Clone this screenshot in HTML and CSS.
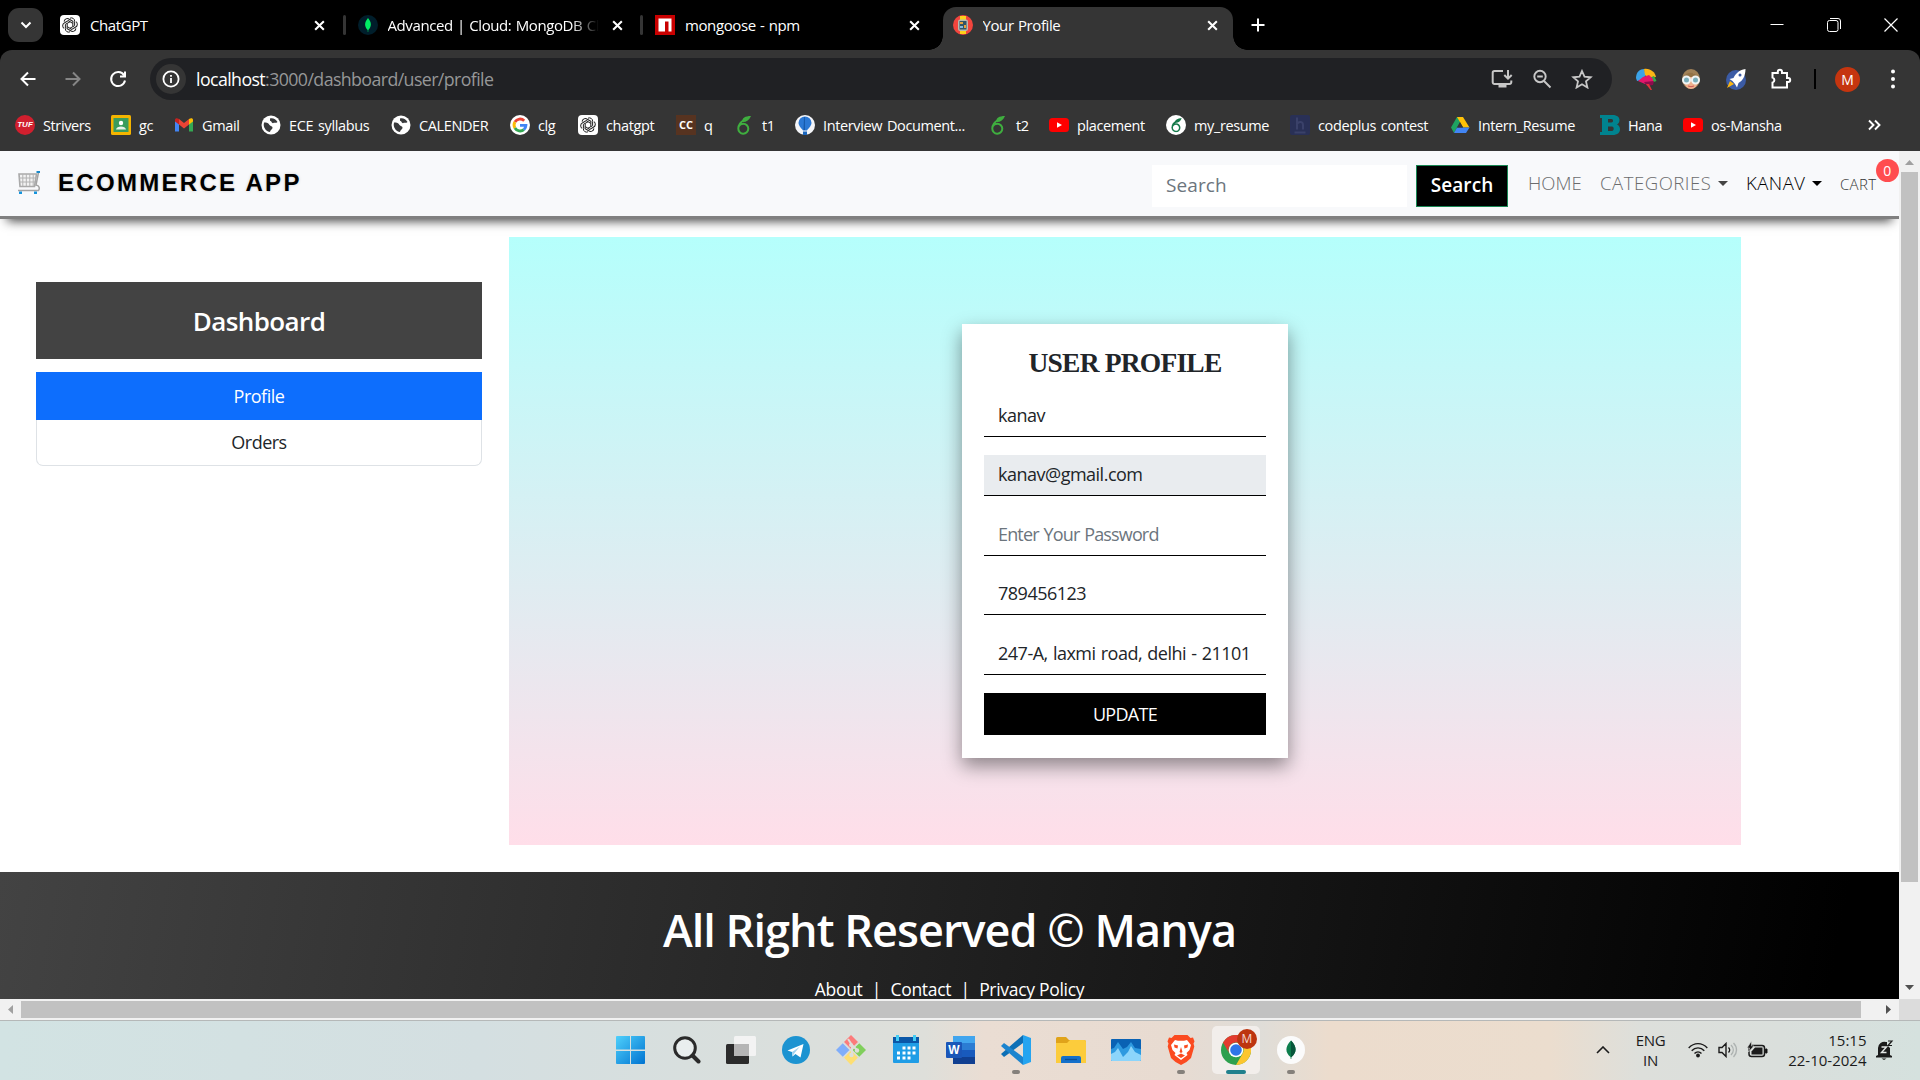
FILE: index.html
```html
<!DOCTYPE html>
<html lang="en">
<head>
<meta charset="utf-8">
<title>Your Profile</title>
<link rel="stylesheet" href="styles.css">
</head>
<body>
<svg width="0" height="0" class="defs">
  <defs>
    <symbol id="x" viewBox="0 0 12 12"><path d="M2 2l8 8M10 2l-8 8" stroke="#fff" stroke-width="1.9" fill="none"/></symbol>
    <symbol id="gpt" viewBox="0 0 20 20"><rect width="20" height="20" rx="4" fill="#fff"/><g fill="none" stroke="#222" stroke-width="1"><g id="petal"><path d="M10 3.2a3.2 3.2 0 0 1 4.6 3.3v4.2l-4.6 2.5"/></g><use href="#petal" transform="rotate(60 10 10)"/><use href="#petal" transform="rotate(120 10 10)"/><use href="#petal" transform="rotate(180 10 10)"/><use href="#petal" transform="rotate(240 10 10)"/><use href="#petal" transform="rotate(300 10 10)"/></g></symbol>
    <symbol id="globe" viewBox="0 0 20 20"><circle cx="10" cy="10" r="9.5" fill="#fff"/><path d="M3 7.5c3 0 4.500.5 5.500 2.500 1 1.500 3 1 3 2.500 0 2-2 2-2.500 4.500C5.500 16.500 3 13.500 2.700 10zM9 3.500c3-.8 6 .8 7.500 3.500-1.500 1.500-3 .2-4.500 1.200-1.800-.4-1-2-3-2.500z" fill="#38393b"/></symbol>
    <symbol id="leaf" viewBox="0 0 20 20"><path d="M17 1C11 1 8 3 8 7c4 .5 7-1.500 9-6z"/><path d="M10 5C6.500 7 4.300 10 4.300 13.500a5 5 0 1 0 5-4.800c-2 0-3.700 1-4.700 2.800" fill="none" stroke="currentColor" stroke-width="2"/></symbol>
    <symbol id="yt" viewBox="0 0 20 20"><rect y="3" width="20" height="14" rx="3.500" fill="#f00"/><path d="M8 7.200v5.600l5-2.800z" fill="#fff"/></symbol>
  </defs>
</svg>

<header class="browser">
  <div class="tabstrip">
    <span class="tab-search"><svg width="14" height="14" viewBox="0 0 14 14"><path d="M2.500 4.500l4.500 4.500 4.500-4.500" fill="none" stroke="#fff" stroke-width="2"/></svg></span>
    <div class="tab"><svg class="fav"><use href="#gpt"/></svg><span class="tab-title">ChatGPT</span><svg class="tab-x"><use href="#x"/></svg></div>
    <div class="tab tab-sep"><svg class="fav" viewBox="0 0 20 20"><circle cx="10" cy="10" r="10" fill="#001e2b"/><path d="M10 3c3.800 4.500 3.800 8.500.3 12l-.1 2h-.4l-.1-2C6.200 11.500 6.200 7.500 10 3z" fill="#00ed64"/></svg><span class="tab-title tab-fade">Advanced | Cloud: MongoDB Cloud</span><svg class="tab-x"><use href="#x"/></svg></div>
    <div class="tab tab-sep"><svg class="fav" viewBox="0 0 20 20"><path fill="#c90000" d="M0 0h20v20H0z"/><path fill="#fff" d="M3.500 3.500h13v13h-3v-10h-3.500v10h-6.500z"/></svg><span class="tab-title">mongoose - npm</span><svg class="tab-x"><use href="#x"/></svg></div>
    <div class="tab tab-active"><svg class="fav" viewBox="0 0 20 20"><circle cx="10" cy="10" r="10" fill="#f2453d"/><path fill="#fdd11b" d="M7 1h6v18H7z"/><rect x="5" y="4.500" width="10" height="11.500" rx="2" fill="#b9b9b0"/><rect x="6.500" y="6" width="7" height="8.500" fill="#356"/><path d="M7 7h3v2H7zM11 10h2v3h-2z" fill="#e7a23a"/><path d="M7 11h3v2H7z" fill="#8bd"/></svg><span class="tab-title">Your Profile</span><svg class="tab-x"><use href="#x"/></svg></div>
    <svg class="new-tab" width="14" height="14" viewBox="0 0 14 14"><path d="M7 .5v13M.5 7h13" stroke="#fff" stroke-width="2"/></svg>
    <div class="window-controls">
      <svg viewBox="0 0 16 16"><path d="M1.500 7.500h13" stroke="#fff"/></svg>
      <svg viewBox="0 0 16 16" fill="none" stroke="#fff"><rect x="1.500" y="3.500" width="10.500" height="11" rx="2"/><path d="M4 1.500h8a2.500 2.500 0 0 1 2.500 2.500v8"/></svg>
      <svg viewBox="0 0 16 16"><path d="M1.500 1.500l13 13M14.500 1.500l-13 13" stroke="#fff" stroke-width="1.200"/></svg>
    </div>
  </div>

  <div class="toolbar">
    <div class="nav-buttons">
      <svg viewBox="0 0 20 20" stroke="#fff"><path d="M17.500 10H3.500M10 3.500L3.500 10l6.500 6.500"/></svg>
      <svg viewBox="0 0 20 20" stroke="#868686"><path d="M2.500 10h14M10 3.500l6.500 6.500-6.500 6.500"/></svg>
      <svg viewBox="0 0 20 20" stroke="#fff"><path d="M16 6.200A7 7 0 1 0 17 11.500M17 2.500v5h-5"/></svg>
    </div>
    <div class="address">
      <span class="site-info"><svg width="20" height="20" viewBox="0 0 20 20"><circle cx="10" cy="10" r="7.600" fill="none" stroke="#fff" stroke-width="1.800"/><path d="M10 9v5M10 6v1.700" stroke="#fff" stroke-width="1.800"/></svg></span>
      <span class="url"><b>localhost</b>:3000/dashboard/user/profile</span>
      <div class="address-icons">
        <svg viewBox="0 0 22 20"><path d="M12 2H3.500a1.800 1.800 0 0 0-1.800 1.800v9.400a1.800 1.800 0 0 0 1.800 1.800h15a1.800 1.800 0 0 0 1.800-1.800V11.500M17 1v8.500M13.300 6l3.700 3.700L20.700 6" fill="none" stroke="#c7c7c7" stroke-width="2"/><path d="M7.500 15h8v3.500h-8z" fill="#c7c7c7"/></svg>
        <svg viewBox="0 0 22 20"><g fill="none" stroke="#c7c7c7" stroke-width="1.900"><circle cx="9" cy="7.500" r="5.700"/><path d="M13 12l6.500 6.500M6.200 7.500h5.600"/></g></svg>
        <svg viewBox="0 0 22 20"><path d="M11 2l2.500 5.700 6.200.6-4.700 4.100 1.400 6.100L11 15.300l-5.400 3.200L7 12.400 2.300 8.300l6.200-.6z" fill="none" stroke="#c7c7c7" stroke-width="1.800"/></svg>
      </div>
    </div>
    <div class="extensions">
      <svg viewBox="0 0 22 22"><path d="M1 10C1 4 5 1 9 1l2 6-4 5-5 1z" fill="#3ba3e8"/><path d="M9 1c6-1 11 3 12 8l-7 1-4-3z" fill="#fdb515"/><path d="M19 8l2.500 5-4 1.500-2-5z" fill="#3aa648"/><path d="M3 13l5-4 6-2 4 4v3l-8 2z" fill="#e3166c"/><path d="M9 14l10-1-1 4-6 1z" fill="#8d0d4d"/><path d="M11 16l3 0 3 6-1.500 0z" fill="#e0343b"/></svg>
      <svg viewBox="0 0 22 22"><ellipse cx="11" cy="11" rx="9" ry="10" fill="#a08158"/><ellipse cx="11" cy="13" rx="7" ry="8" fill="#f0b18d"/><path d="M4 9c2-5 10-6 14 0z" fill="#927246"/><g fill="#79aebb" stroke="#f1f4f4" stroke-width="2"><circle cx="6.500" cy="12" r="3.500"/><circle cx="15.500" cy="12" r="3.500"/></g><path d="M8 18q3 1.500 6 0" stroke="#c55" fill="none"/></svg>
      <svg viewBox="0 0 22 22"><circle cx="11" cy="12" r="10" fill="#3b5ba5"/><path d="M20.500 1c-7 1-10 5-12 9l-4 1 3 2 2.500 3 2 3.500 1.500-4.500c4-2 7-7 7-14z" fill="#fff"/><circle cx="15" cy="7" r="1.500" fill="#3b5ba5"/><path d="M2 20l3-7 4 3z" fill="#fbb612"/></svg>
      <svg viewBox="0 0 22 22"><path d="M2.500 5h5.300V3.800a2.100 2.100 0 0 1 4.200 0V5h5v5h1.200a2 2 0 0 1 0 4H17v5.500H2.500V14.600a2.600 2.600 0 0 0 0-5z" fill="none" stroke="#fff" stroke-width="2"/></svg>
    </div>
    <span class="toolbar-sep"></span>
    <span class="account">M</span>
    <svg class="menu" width="6" height="22" viewBox="0 0 6 22" fill="#fff"><circle cx="3" cy="3.500" r="2"/><circle cx="3" cy="11" r="2"/><circle cx="3" cy="18.500" r="2"/></svg>
  </div>

  <nav class="bookmarks">
    <a><span class="tup">TUF</span>Strivers</a>
    <a><svg viewBox="0 0 20 20"><rect width="20" height="20" rx="1.500" fill="#f4b400"/><path fill="#3a9c5c" d="M2.500 3h15v14h-15z"/><circle cx="10" cy="8" r="2.200" fill="#fff"/><path d="M5 14.500c.5-4 9.500-4 10 0z" fill="#e8f2ea"/></svg>gc</a>
    <a><svg viewBox="0 0 20 20"><path d="M1 4.500v12h4V8z" fill="#4285f4"/><path d="M19 4.500v12h-4V8z" fill="#34a853"/><path d="M1 5c0-2 2-2.500 4-1v5.500L1 6.500z" fill="#c5221f"/><path d="M5 4l5 4 5-4v5.500l-5 4-5-4z" fill="#ea4335"/><path d="M19 5c0-2-2-2.500-4-1v5.500l4-3z" fill="#fbbc04"/></svg>Gmail</a>
    <a><svg><use href="#globe"/></svg>ECE syllabus</a>
    <a><svg><use href="#globe"/></svg>CALENDER</a>
    <a><svg viewBox="0 0 20 20"><circle cx="10" cy="10" r="10" fill="#fff"/><g fill="none" stroke-width="2.900"><path d="M14.200 5.700A6 6 0 0 0 4.900 7" stroke="#ea4335"/><path d="M4.900 7a6 6 0 0 0 0 6" stroke="#fbbc05"/><path d="M4.900 13a6 6 0 0 0 9 1.600" stroke="#34a853"/><path d="M13.900 14.600a6 6 0 0 0 2-4.200H10" stroke="#4285f4"/></g></svg>clg</a>
    <a><svg><use href="#gpt"/></svg>chatgpt</a>
    <a><span class="cc">CC</span>q</a>
    <a><svg class="leaf"><use href="#leaf"/></svg>t1</a>
    <a><svg viewBox="0 0 20 20"><circle cx="10" cy="10" r="10" fill="#f4f5f8"/><path d="M10 1.500a6.500 6.500 0 0 1 6.500 6.300C16.500 11 13 14 12 15.500H8C7 14 3.500 11 3.500 7.800A6.500 6.500 0 0 1 10 1.500z" fill="#2b78d4"/><path d="M9 2h1v13H8.500z" fill="#175bac"/><path d="M8 16.500h4V20H8z" fill="#1b66bd"/></svg>Interview Document...</a>
    <a><svg class="leaf"><use href="#leaf"/></svg>t2</a>
    <a><svg><use href="#yt"/></svg>placement</a>
    <a><svg class="leaf leaf-dark" viewBox="0 0 20 20"><circle cx="10" cy="10" r="10" fill="#fff"/><use href="#leaf" x="3" y="2.500" width="15" height="15"/></svg>my_resume</a>
    <a><svg viewBox="0 0 20 20"><rect width="20" height="20" rx="2" fill="#293056"/><path d="M7 2.500v12M7 9c2-3 6-2.500 6 1v4.500M4.500 17.500h11" fill="none" stroke="#3a4169" stroke-width="2"/></svg>codeplus contest</a>
    <a><svg viewBox="0 0 20 20"><path d="M7 2h6l-6 10.500-3 5.500-3-5.500z" fill="#1ea362"/><path d="M7 2h6l6.500 10.500h-6.300z" fill="#ffc107"/><path d="M4 18l3-5.500h12.500L16 18z" fill="#4285f4"/><path d="M10 7.200L7 12.500h6z" fill="#353535"/></svg>Intern_Resume</a>
    <a><svg viewBox="0 0 20 20"><path fill-rule="evenodd" d="M0 0h12.500c5 0 7 2.500 7 5 0 2-1 3.600-2.500 4.400 2 .8 3 2.600 3 4.800 0 3.300-2.500 5.800-7.500 5.800H0v-3h2V3H0zM8 4v3.500h3.500c2 0 2-3.500 0-3.500zM8 11.500V16h4c2.300 0 2.300-4.500 0-4.500z" fill="#00838f"/></svg>Hana</a>
    <a><svg><use href="#yt"/></svg>os-Mansha</a>
    <svg class="more" width="14" height="12" viewBox="0 0 14 12"><path d="M2 1.500L6.500 6 2 10.500M8 1.500L12.500 6 8 10.500" fill="none" stroke="#fff" stroke-width="1.900"/></svg>
  </nav>
</header>

<div class="viewport">
  <div class="page">
    <div class="navbar">
      <svg class="cart-logo" width="24" height="24" viewBox="0 0 24 24"><g fill="none"><path d="M2 3h17.500l-2 12.500H3z" fill="#f2f2f2" stroke="#a9a9a9" stroke-width="1.600"/><path d="M5.800 3v12M9.300 3v12M12.800 3v12M16.200 3v12M2 7h16.500M2.500 11h15.500" stroke="#b2b2b2"/><path d="M21.500 1.500L19 14c3.500.5 4 3.500 2.500 5.500H1" stroke="#a3a3a3" stroke-width="1.500"/></g><path d="M19.500 0H23v2h-3.500z" fill="#1989c9"/><path d="M2 20.500h3V23H2zM17 20.500h3V23h-3z" fill="#1594dc"/></svg>
      <span class="brand">ECOMMERCE APP</span>
      <input class="search" placeholder="Search">
      <button class="search-btn">Search</button>
      <div class="links">
        <a>HOME</a><a class="caret">CATEGORIES</a><a class="caret user">KANAV</a><a class="cart">CART<sup class="badge">0</sup></a>
      </div>
    </div>

    <div class="content">
      <aside class="sidebar">
        <h4>Dashboard</h4>
        <a class="item item-active">Profile</a>
        <a class="item">Orders</a>
      </aside>
      <main class="panel">
        <form class="card">
          <h3>USER PROFILE</h3>
          <input value="kanav">
          <input value="kanav@gmail.com" disabled>
          <input placeholder="Enter Your Password">
          <input value="789456123">
          <input value="247-A, laxmi road, delhi - 21101">
          <button type="button">UPDATE</button>
        </form>
      </main>
    </div>

    <footer class="footer">
      <h1>All Right Reserved © Manya</h1>
      <p><a>About</a><i>|</i><a>Contact</a><i>|</i><a>Privacy Policy</a></p>
    </footer>
  </div>
  <div class="vscroll">
    <svg width="9" height="5" viewBox="0 0 9 5"><path d="M0 5L4.500 0 9 5z" fill="#a0a0a0"/></svg>
    <span class="vthumb"></span>
    <svg class="down" width="9" height="5" viewBox="0 0 9 5"><path d="M0 0l4.500 5L9 0z" fill="#505050"/></svg>
  </div>
  <div class="hscroll">
    <svg width="5" height="9" viewBox="0 0 5 9"><path d="M5 0L0 4.500 5 9z" fill="#a0a0a0"/></svg>
    <span class="hthumb"></span>
    <svg class="right" width="5" height="9" viewBox="0 0 5 9"><path d="M0 0l5 4.500L0 9z" fill="#505050"/></svg>
  </div>
  <div class="corner"></div>
</div>

<div class="taskbar">
  <div class="apps">
    <span class="app"><svg viewBox="0 0 30 30"><defs><linearGradient id="win" x2="1" y2="1"><stop stop-color="#4fd0fb"/><stop offset="1" stop-color="#0073d1"/></linearGradient></defs><path d="M0 2q0-1 1-1h13v13.500H0zM15 1H28q1 0 1 1v12.500H15zM0 16h14v13H1q-1 0-1-1zM15 16H29v12q0 1-1 1H15z" fill="url(#win)"/></svg></span>
    <span class="app"><svg viewBox="0 0 30 30" fill="none" stroke="#2a2a2a"><circle cx="14" cy="13" r="10.300" stroke-width="3" fill="#e9eeee"/><path d="M21.500 20.500l6 6" stroke-width="4" stroke-linecap="round"/></svg></span>
    <span class="app"><svg viewBox="0 0 30 30"><rect y="9" width="23" height="20" rx="1.500" fill="#2b2b2b"/><rect x="8" y="1" width="22" height="20" rx="1.500" fill="#f3f3f3"/><path d="M8 9h15v12H8z" fill="#b5b5b5"/></svg></span>
    <span class="app"><svg viewBox="0 0 30 30"><circle cx="15" cy="15" r="14" fill="#1c93d1"/><path d="M6.500 15.500L22.500 9l-3 13.500-5-3.500-3 2.500-.5-4.500z" fill="#fff"/><path d="M11 17l8-5.500-5.500 6.500-2 3.500z" fill="#9fd2ef"/></svg></span>
    <span class="app"><svg viewBox="0 0 30 30"><path d="M15 0l7 7-7 7-7-7z" fill="#fc7b7b"/><path d="M22.500 7.500L30 15l-7.500 7.500L15 15z" fill="#80cf5c"/><path d="M7.500 7.500L15 15l-7.500 7.500L0 15z" fill="#80aefa"/><path d="M15 15l7 7.500-7 7.500-7-7.500z" fill="#fddf74"/><path d="M12 4l4 6v11M16 10l5 5" fill="none" stroke="#dedfda" stroke-width="2"/><path d="M7 7.500l8 8 8-8M7 22.500l8-8 8 8" fill="none" stroke="#dedfda" stroke-width="1.500"/><circle cx="15" cy="10" r="2" fill="#dedfda"/><circle cx="21" cy="15.500" r="2.200" fill="#dedfda"/><circle cx="15.500" cy="20" r="2.200" fill="#dedfda"/></svg></span>
    <span class="app"><svg viewBox="0 0 30 30"><rect x="2" y="2" width="26" height="26" rx="1" fill="#1f9de6"/><path d="M2 2h26v6H2z" fill="#0a57a8"/><path d="M5 0h3v6H5zM22 0h3v6h-3z" fill="#43cdf5"/><path d="M11.500 11.500h3v3h-3zM16.500 11.500h3v3h-3zM21.500 11.500h3v3h-3zM6 16.500h3v3H6zM11.500 16.500h3v3h-3zM16.500 16.500h3v3h-3zM21.500 16.500h3v3h-3zM6 21.500h3v3H6zM11.500 21.500h3v3h-3zM16.500 21.500h3v3h-3z" fill="#fff"/></svg></span>
    <span class="app"><svg viewBox="0 0 30 30"><path d="M7 1h22v7H7z" fill="#41a5ee"/><path d="M7 8h22v7H7z" fill="#2b7cd3"/><path d="M7 15h22v7H7z" fill="#185abd"/><path d="M7 22h22v7H7z" fill="#103f91"/><rect y="7" width="16" height="16" rx="1" fill="#1a56b8"/><text x="8" y="19.300" class="word-w">W</text></svg></span>
    <span class="app running"><svg viewBox="0 0 30 30"><path d="M22 0v8L3 22l-3-3z" fill="#0d6fb6"/><path d="M0 11l3-3 19 14v8z" fill="#1b84cf"/><path d="M22 0l8 3v24l-8 3z" fill="#25a4f0"/></svg></span>
    <span class="app"><svg viewBox="0 0 30 30"><path d="M0 3.500q0-1.500 1.500-1.500H10l3 3h15q2 0 2 2v20H0z" fill="#e0a31a"/><path d="M0 8h11l3-3h14q2 0 2 2v21H0z" fill="#fccc3c"/><path d="M5 23q0-2 2-2h16q2 0 2 2v5H5z" fill="#1470ca"/><path d="M9 24.500h12" stroke="#0a4f96" stroke-width="1.300"/></svg></span>
    <span class="app"><svg viewBox="0 0 30 30"><rect y="4" width="30" height="22" rx="1" fill="#0a62b4"/><path d="M0 14l3-1 4-6 5 7 4-2 4-5 4 6 6 1v11q0 1-1 1H1q-1 0-1-1z" fill="#2e9ae0"/><path d="M0 19l4-2 3-4 5 9 5-5 3-6 4 6 6 3v5q0 1-1 1H1q-1 0-1-1z" fill="#8cd5fb"/></svg></span>
    <span class="app running"><svg viewBox="0 0 30 30"><path d="M8.500 0h13l3 3 2.500-.5 1.500 4-1 2 .8 3L25 23l-4.500 4L15 30l-5.500-3L5 23 1.700 11.500l.8-3-1-2L3 2.500 5.500 3z" fill="#fb4b20"/><path d="M9 5l3 .7h6l3-.7 4 5-1.500 5-3 3 1 2-6.500 5-6.500-5 1-2-3-3L5 10z" fill="#fff"/><path d="M8 9.500l4 1-.5 3-3-1zM22 9.500l-4 1 .5 3 3-1zM15 12l1.500 5-1.500 1-1.500-1zM11 20.500l4-2 4 2-4 2.500z" fill="#fb4b20"/></svg></span>
    <span class="app current"><svg viewBox="0 0 30 30"><circle cx="15" cy="15" r="15" fill="#2da04e"/><path d="M2 7.500A15 15 0 0 1 28 7.500H15A7.500 7.500 0 0 0 8.500 18.700z" fill="#e33b2e"/><path d="M28 7.500A15 15 0 0 1 15 30l6.500-11.200A7.500 7.500 0 0 0 15 7.500z" fill="#fcc62f"/><circle cx="15" cy="15" r="7.300" fill="#fff"/><circle cx="15" cy="15" r="5.800" fill="#2f75e8"/></svg><b class="app-badge">M</b></span>
    <span class="app running"><svg viewBox="0 0 30 30"><circle cx="15" cy="15" r="14" fill="#fbfbfb"/><path d="M15 5.500c6 6 6 12 .5 16.500l-.2 2h-.6l-.2-2C9 17.500 9 11.500 15 5.500z" fill="#0c7d4c"/><path d="M15 5.500c6 6 6 12 .5 16.500H15z" fill="#07553a"/></svg></span>
  </div>
  <div class="tray">
    <svg class="chev" width="14" height="8" viewBox="0 0 14 8"><path d="M1 7l6-6 6 6" fill="none" stroke="#1b1b1b" stroke-width="1.600"/></svg>
    <p class="lang">ENG<br>IN</p>
    <svg class="wifi" width="20" height="16" viewBox="0 0 20 16"><g fill="none" stroke="#1b1b1b" stroke-width="1.400"><path d="M.7 6C6 .2 14 .2 19.300 6M3.700 8.700c3.500-3.800 9.100-3.800 12.600 0M6.500 11.500c2-2 5-2 7 0"/></g><circle cx="10" cy="13.500" r="1.900" fill="#1b1b1b"/></svg>
    <svg class="vol" width="20" height="16" viewBox="0 0 20 16" fill="none" stroke="#1b1b1b" stroke-width="1.400"><path d="M1 5.500h3l4-4v13l-4-4H1zM10.500 5.500c1.500 1.500 1.500 3.500 0 5"/><path d="M13 3c3 3 3 7 0 10M15.500 1c4 4 4 10 0 14" stroke="#adb2b1"/></svg>
    <svg class="battery" width="21" height="18" viewBox="0 0 21 18"><rect x="2" y="4.500" width="15.500" height="11" rx="2.500" fill="none" stroke="#1b1b1b" stroke-width="1.500"/><path d="M8 6.500h7.500v7h-11v-3z" fill="#1b1b1b"/><path d="M18.500 8h1.500v4h-1.500z" stroke="#1b1b1b"/><path d="M4.500 0L0 7h2.500L1.500 11 7 5H4.500z" fill="#1b1b1b" stroke="#dde0dd" stroke-width=".6"/></svg>
    <p class="clock">15:15<br>22-10-2024</p>
    <svg class="bell" width="18" height="20" viewBox="0 0 18 20"><path d="M2 15V8a6.500 6.500 0 0 1 8-6h1v3l3 3v7l2 1v1.500H0V16z" fill="#1b1b1b"/><path d="M5.500 18.500h5l-2.500 1.500z" fill="#1b1b1b"/><path d="M5.500 7h5l-5 5.500h5" fill="none" stroke="#e4e7e6" stroke-width="1.400"/><path d="M12 1h4l-4 4.500h4" fill="none" stroke="#1b1b1b" stroke-width="1.200"/></svg>
  </div>
</div>
</body>
</html>
```
FILE: styles.css
```css
* { box-sizing: border-box; }
body { margin: 0; width: 1920px; height: 1080px; overflow: hidden; background: #000; color: #fff; font-family: "Open Sans", "Noto Sans", sans-serif; }
h1, h3, h4, p { margin: 0; }
svg { display: block; flex: none; }
.defs { position: absolute; }

/* Browser chrome */
.browser { height: 151px; background: #000; }
.tabstrip { display: flex; align-items: center; height: 50px; padding-left: 8px; }
.tab-search { display: flex; align-items: center; justify-content: center; width: 35px; height: 34px; border-radius: 11px; background: #353535; }
.tab-search + .tab { margin-left: 7px; }
.tab { position: relative; display: flex; align-items: center; width: 297.500px; height: 50px; padding-left: 10px; }
.fav { width: 20px; height: 20px; }
.tab-title { flex: none; width: 213px; margin-left: 10px; overflow: hidden; white-space: nowrap; font-size: 15px; letter-spacing: -0.4px; word-spacing: 0.8px; }
.tab-fade { -webkit-mask-image: linear-gradient(to right, #000 86%, transparent 99%); mask-image: linear-gradient(to right, #000 86%, transparent 99%); }
.tab-x { width: 13px; height: 13px; margin-left: 10px; }
.tab-sep::before { content: ""; position: absolute; left: -5px; top: 15px; width: 3px; height: 20px; border-radius: 2px; background: #353535; }
.tab-active::before { content: ""; position: absolute; z-index: 0; left: 0; top: 7px; width: 290px; height: 43px; border-radius: 13px 13px 0 0; background: #353535; }
.tab-active::after { content: ""; position: absolute; left: -14px; bottom: 0; width: 318px; height: 14px; background: radial-gradient(circle at 0 0, transparent 13.500px, #353535 14px) left / 14px 14px no-repeat, radial-gradient(circle at 100% 0, transparent 13.500px, #353535 14px) right / 14px 14px no-repeat; }
.tab-active > * { position: relative; z-index: 1; }
.new-tab { margin-left: 11px; }
.window-controls { display: flex; gap: 41px; margin-left: auto; padding-right: 21px; }
.window-controls svg { width: 16px; height: 16px; }

.toolbar { display: flex; align-items: center; height: 58px; padding-left: 17.500px; border-radius: 12px 12px 0 0; background: #353535; }
.nav-buttons { display: flex; gap: 25px; width: 132.500px; }
.nav-buttons svg { width: 20px; height: 20px; fill: none; stroke-width: 2; }
.address { display: flex; align-items: center; width: 1462px; height: 42px; padding-left: 6px; border-radius: 21px; background: #202124; }
.site-info { display: flex; align-items: center; justify-content: center; width: 30px; height: 30px; border-radius: 50%; background: #353535; }
.url { margin-left: 10px; color: #969798; font-size: 17.800px; letter-spacing: -0.6px; }
.url b { color: #fff; font-weight: 400; }
.address-icons { display: flex; gap: 18px; margin-left: auto; padding-right: 19px; }
.address-icons svg { width: 22px; height: 20px; }
.extensions { display: flex; gap: 23px; margin-left: 23px; }
.extensions svg { width: 22px; height: 24px; }
.toolbar-sep { width: 2px; height: 20px; margin-left: 22px; background: #000; }
.account { width: 25px; height: 25px; margin-left: 19px; border-radius: 50%; background: #c5350f; font: 14px/25px "Open Sans", sans-serif; text-align: center; }
.menu { margin-left: 30px; }

.bookmarks { display: grid; grid-template-columns: 96px 63px 87px 130px 119px 68px 98px 58px 61px 193px 61px 117px 124px 160px 150px 83px 184px 1fr; align-items: center; height: 43px; padding: 0 0 9px 15px; background: #353535; }
.bookmarks a { display: flex; align-items: center; gap: 8px; white-space: nowrap; font-size: 14.500px; letter-spacing: -0.38px; word-spacing: 1.500px; }
.bookmarks a svg { width: 20px; height: 20px; }
.bookmarks .leaf { color: #3fae3f; fill: #3fae3f; }
.bookmarks .leaf-dark { color: #167a4a; fill: #167a4a; }
.tup { width: 20px; height: 20px; border-radius: 50%; background: #d11f2e; font: italic bold 8px/20px "Liberation Sans", sans-serif; letter-spacing: 0; text-align: center; }
.cc { width: 20px; height: 20px; background: #573320; font: bold 11px/20px "Open Sans", sans-serif; letter-spacing: 0; text-align: center; }

/* Scrollable page area */
.viewport { display: grid; grid-template: 848px 21px / 1899px 21px; height: 869px; background: #fff; }
.page { overflow: hidden; color: #212529; background: #fff; }
.vscroll { display: flex; flex-direction: column; align-items: center; padding-top: 9px; background: #f1f1f1; }
.vthumb { width: 17px; height: 710px; margin-top: 7px; background: #c1c1c1; }
.down { margin-top: 103px; }
.hscroll { display: flex; align-items: center; padding-left: 8px; background: #f1f1f1; }
.hthumb { width: 1840px; height: 17px; margin-left: 8px; background: #c1c1c1; }
.right { margin-left: 25px; }
.corner { background: #dcdcdc; }

.navbar { position: relative; display: flex; align-items: center; height: 68px; padding: 0 0 0 17px; border-bottom: 3px solid #808080; background: #f8f9fb; box-shadow: 0 9px 10px -7px #444; font-family: "Open Sans", sans-serif; }
.cart-logo { margin-top: -1px; }
.brand { width: 280px; margin: -1px 0 0 17px; color: #000; font: bold 24px "Liberation Sans", Arial, sans-serif; letter-spacing: 2.300px; white-space: nowrap; text-shadow: 0 0 3px #ccc; }
.search { width: 255px; height: 42px; margin: 5px 0 0 auto; padding: 0 14px 2px; border: 0; background: #fff; font: 19px "Open Sans", sans-serif; letter-spacing: 0.100px; }
.search::placeholder, .card input::placeholder { color: #6c757d; opacity: 1; }
.search-btn { width: 92px; height: 42px; margin: 5px 0 0 9px; padding: 0 0 3px; border: 1px solid #198754; background: #000; color: #fff; font: 600 19px "Open Sans", sans-serif; letter-spacing: 0.100px; }
.links { display: grid; grid-template-columns: 72px 146px 94px 59px; align-items: center; margin: -2px 0 0 20px; color: #6b6c6e; font-size: 18.500px; font-weight: 300; }
.links a { white-space: nowrap; }
.caret::after { content: ""; display: inline-block; margin-left: 6px; border: 5px solid transparent; border-top-color: #444; border-bottom: 0; vertical-align: 4px; }
.links .caret { letter-spacing: 0.550px; }
.links .user { color: #000; letter-spacing: 0.500px; }
.links .user::after { border-top-color: #000; }
.links .cart { position: relative; padding-top: 3px; color: #333; font-size: 15px; letter-spacing: 0.300px; }
.badge { position: absolute; right: 0; top: -12px; width: 23px; height: 23px; border-radius: 50%; background: #ff4d4f; color: #fff; font: 14px/23px "Open Sans", sans-serif; text-align: center; }

.content { display: flex; align-items: flex-start; gap: 27px; height: 653px; padding: 18px 0 0 36px; }
.sidebar { width: 446px; margin-top: 45px; text-align: center; }
.sidebar h4 { height: 77px; margin-bottom: 13px; background: #434343; color: #fff; font-size: 26px; font-weight: 600; line-height: 79px; letter-spacing: -0.6px; }
.item { display: block; height: 46px; border: 1px solid #dee2e6; border-top: 0; border-radius: 0 0 7px 7px; font-size: 18px; line-height: 45px; letter-spacing: -0.5px; }
.item-active { height: 48px; border: 0; border-radius: 0; background: #0d6efd; color: #fff; line-height: 48px; }
.panel { width: 1232px; height: 608px; padding-top: 87px; background: linear-gradient(#b5fffc, #ffdee9); }
.card { display: flex; flex-direction: column; gap: 18.400px; width: 326px; height: 434px; margin: 0 auto; padding: 22px; background: #fff; box-shadow: 0 8px 18px rgba(0, 0, 0, .42); }
.card h3 { height: 31.600px; font: bold 27.500px/34px "Liberation Serif", serif; text-align: center; letter-spacing: -0.8px; white-space: nowrap; }
.card input { width: 282px; height: 41px; flex: none; padding: 0 14px 2px; border: 0; border-bottom: 1px solid #000; background: #fff; color: #212529; font: 18px "Open Sans", sans-serif; letter-spacing: -0.5px; word-spacing: 1px; }
.card input::placeholder { letter-spacing: -0.85px; }
.card input:disabled { background: #e9ecef; }
.card button { height: 42px; flex: none; border: 0; background: #000; color: #fff; font: 18px "Open Sans", sans-serif; letter-spacing: -0.7px; }

.footer { height: 170px; background: linear-gradient(100deg, #434343, #000 96%); color: #fff; text-align: center; }
.footer h1 { padding-top: 27px; font-size: 45px; font-weight: 600; line-height: 61px; letter-spacing: -0.95px; }
.footer p { display: flex; justify-content: center; gap: 9.300px; margin-top: 17px; font-size: 17.500px; line-height: 25px; letter-spacing: -0.3px; }
.footer i { font-style: normal; }

/* Taskbar */
.taskbar { display: flex; height: 60px; border-top: 1px solid #b5b8b8; background: linear-gradient(to right, #d2e3e3, #d4dfe1 480px, #d9dfdd 740px, #dedfda 925px, #eaddd3 985px, #e8dbd1 1170px, #dfddd8 1260px, #ecdccd 1330px, #ebddce 1550px, #dddfdb 1640px, #dadfdc 1780px, #d5e1de); color: #1b1b1b; }
.apps { display: flex; width: 715px; margin-left: 603px; }
.app { position: relative; display: flex; align-items: center; justify-content: center; width: 55px; height: 58px; }
.app svg { position: relative; width: 30px; height: 30px; }
.word-w { font: bold 12px "Liberation Sans", sans-serif; fill: #fff; text-anchor: middle; }
.running::after, .current::after { content: ""; position: absolute; left: 50%; top: 49px; width: 8px; height: 4px; margin-left: -4px; border-radius: 2px; background: #85807b; }
.current::before { content: ""; position: absolute; left: 4px; top: 5px; width: 48px; height: 48px; border-radius: 5px; background: #f2eeeb; }
.current::after { width: 20px; margin-left: -10px; background: #20808d; }
.app-badge { position: absolute; left: 29px; top: 8px; width: 20px; height: 20px; border-radius: 50%; background: #bd3510; color: #f4d8d0; font: 12px/20px "Open Sans", sans-serif; text-align: center; }
.tray { display: flex; align-items: center; flex: 1; padding-bottom: 1px; font-size: 15px; line-height: 20px; letter-spacing: -0.35px; }
.chev { margin-left: 278px; }
.lang { width: 40px; margin-left: 20.500px; text-align: center; }
.wifi { margin-left: 17px; }
.vol { margin-left: 10px; }
.battery { margin-left: 9px; }
.clock { width: 90px; margin-left: 9px; text-align: right; white-space: nowrap; letter-spacing: 0; }
.bell { margin-left: 9px; }
```
